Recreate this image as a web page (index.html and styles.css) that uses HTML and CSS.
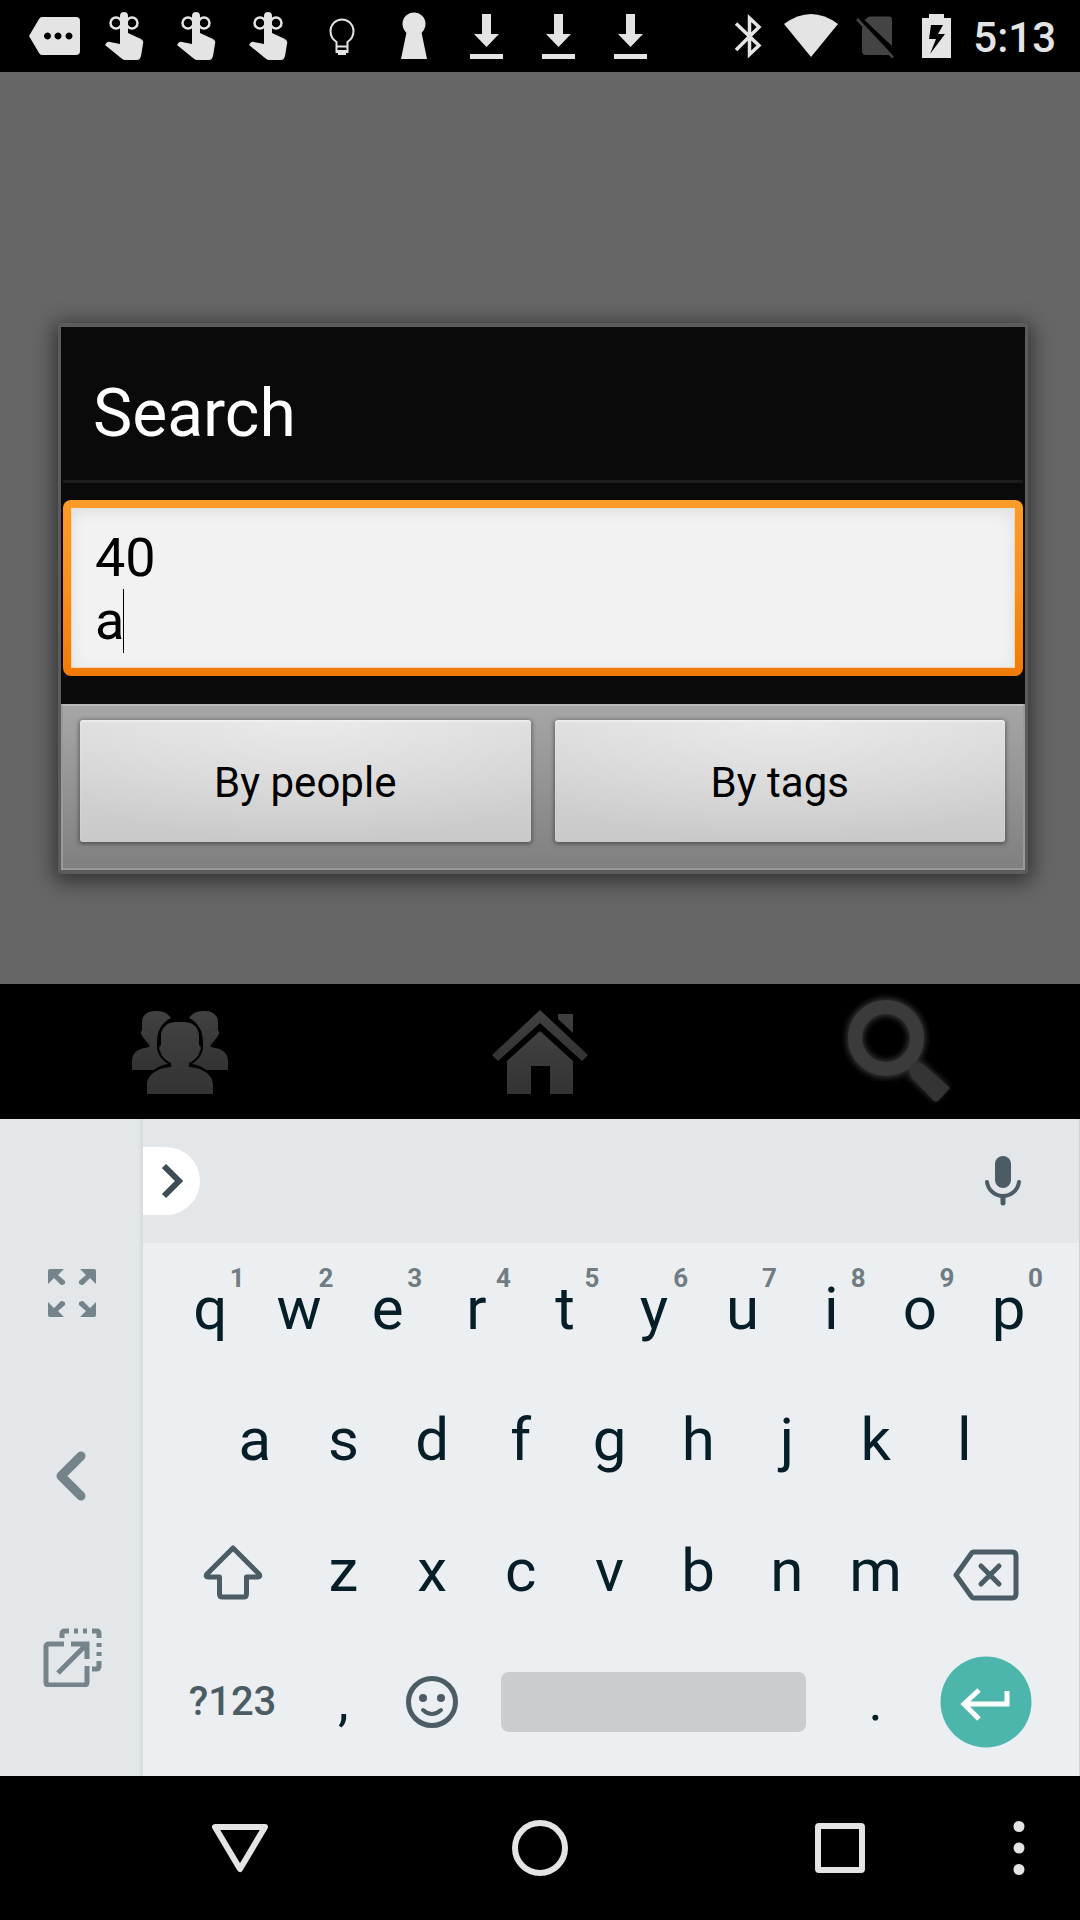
FILE: index.html
```html
<!DOCTYPE html>
<html lang="en">
<head>
<meta charset="utf-8">
<meta name="viewport" content="width=device-width, initial-scale=1">
<title>Search</title>
<link rel="stylesheet" href="styles.css">
</head>
<body>
<svg class="defs" aria-hidden="true">
  <defs>
    <linearGradient id="shade" x1="0" y1="0" x2="0" y2="1">
      <stop offset="0" stop-color="#414141"/>
      <stop offset="1" stop-color="#333"/>
    </linearGradient>
    <filter id="glow" x="-20%" y="-20%" width="140%" height="140%">
      <feGaussianBlur stdDeviation="3"/>
    </filter>
    <symbol id="reminder" viewBox="0 0 72 72">
      <path d="M30 16a4 4 0 0 1 8 0v17l13 6q3 2 2 5l-2 12q-1 4-4 4H35q-2 0-4-2L15 45q2-4 5-3l10 2z"/>
      <circle cx="26" cy="23" r="5.500" fill="none" stroke="currentColor" stroke-width="2.500"/>
      <circle cx="42" cy="23" r="5.500" fill="none" stroke="currentColor" stroke-width="2.500"/>
    </symbol>
    <symbol id="download" viewBox="0 0 72 72">
      <path d="M32 14h9v20h8L36.500 47 24 34h8zM20 54h33v5H20z"/>
    </symbol>
  </defs>
</svg>

<header class="status">
  <div class="notifications">
    <svg class="note" viewBox="0 0 72 72"><path fill-rule="evenodd" d="M24 17h34a4 4 0 0 1 4 4v30a4 4 0 0 1-4 4H24q-2 0-3-2L11 36l10-17q1-2 3-2zM29.500 32.500a3.500 3.500 0 1 0 .01 0zM40 32.500a3.500 3.500 0 1 0 .01 0zM51 32.500a3.500 3.500 0 1 0 .01 0z"/></svg>
    <svg class="note"><use href="#reminder"/></svg>
    <svg class="note"><use href="#reminder"/></svg>
    <svg class="note"><use href="#reminder"/></svg>
    <svg class="note" viewBox="0 0 72 72"><path fill="none" stroke="currentColor" stroke-width="2" d="M30.500 52V42q-6-4-6-11a11.500 11.500 0 0 1 23 0q0 7-6 11v10zM31 46.500h10"/><path d="M30 50h12v3h-2v2h-8v-2h-2z"/></svg>
    <svg class="note" viewBox="0 0 72 72"><circle cx="36" cy="24" r="11.500"/><path d="M29 30h14l6 29H23z"/></svg>
    <svg class="note"><use href="#download"/></svg>
    <svg class="note"><use href="#download"/></svg>
    <svg class="note"><use href="#download"/></svg>
  </div>
  <div class="system">
    <svg class="signal" viewBox="0 0 63 72"><path fill="none" stroke="currentColor" stroke-width="3.500" d="M19 23.500l23 22-9.500 9V18l9.500 9-23 23"/></svg>
    <svg class="signal" viewBox="0 0 63 72"><path d="M4 24q27-20 54 0L31 57z"/></svg>
    <svg class="signal dim" viewBox="0 0 63 72"><path d="M26 16.500h20a3 3 0 0 1 3 3V46L21.500 20zM19 26l29 28q-1 1-3 1H23q-4 0-4-4z"/><path d="M15 18l36 38.500-2 2L13 20z"/></svg>
    <svg class="signal" viewBox="0 0 63 72"><path fill-rule="evenodd" d="M16 18h7v-4h15v4h7v40H16zM25 25l-2 14h7l-6 15 15-20h-7l5-9z"/></svg>
    <time class="clock">5:13</time>
  </div>
</header>

<main class="stage">
  <div class="app">
    <div class="canvas"></div>
    <nav class="tabs" aria-label="Sections">
      <button class="tab" aria-label="People">
        <svg width="96" height="84" viewBox="0 0 96 84" fill="url(#shade)"><path d="M39 8C34 0 24 1 22 1 15 1 10 6 10 12v8q-2 2 0 6l8 10q0 1-5 2C5 39 0 44 0 51v9h22q6-5 14-6c-8-6-12-12-11-21 0-12 4-20 14-25zM57 8C62 0 72 1 74 1c7 0 12 5 12 11v8q2 2 0 6l-8 10q0 1 5 2c8 1 13 6 13 13v9H74q-6-5-14-6c8-6 12-12 11-21 0-12-4-20-14-25z"/><path d="M44 12h8c9 0 15 6 15 14v9q3 2 1 6-2 8-11 12v4c14 1 24 8 24 18v9H15v-9c0-10 10-17 24-18v-4q-9-4-11-12-2-4 1-6v-9c0-8 6-14 15-14z"/></svg>
      </button>
      <button class="tab" aria-label="Home">
        <svg width="96" height="84" viewBox="0 0 96 84" fill="url(#shade)"><path d="M48 0l48 45-6 6-42-38L6 51l-6-6zM66 4h15v19L66 9z"/><path d="M48 21l33 30v33H58V56H39v28H15V51z"/></svg>
      </button>
      <button class="tab" aria-label="Search">
        <svg width="116" height="116" viewBox="0 0 116 116">
          <g filter="url(#glow)" fill="none" stroke="#3a3a3a"><circle cx="44" cy="44" r="31" stroke-width="17"/><path d="M72 74l28 26" stroke-width="20"/></g>
          <circle cx="44" cy="44" r="31" fill="none" stroke="#3b3b3b" stroke-width="14"/>
          <path d="M66 75l8-8 8 4 26 23-12 13q-2 1-4 0L70 84z" fill="#343434"/>
        </svg>
      </button>
    </nav>
  </div>

  <form class="dialog" role="dialog" aria-labelledby="dialog-title">
    <h1 class="title" id="dialog-title">Search</h1>
    <div class="body">
      <div class="field">
        <textarea class="query" rows="2" aria-labelledby="dialog-title">40
a</textarea>
        <span class="caret"></span>
      </div>
    </div>
    <div class="actions">
      <button class="action" type="button">By people</button>
      <button class="action" type="button">By tags</button>
    </div>
  </form>
</main>

<section class="keyboard" aria-label="Keyboard">
  <div class="rail">
    <button class="tool" aria-label="Full size">
      <svg width="60" height="60" viewBox="0 0 60 60"><g fill="currentColor"><path d="M6 8q0-2 2-2h14l-6 6 7 6q1 4-4 4l-7-7-6 6zM54 8q0-2-2-2H38l6 6-7 6q-1 4 4 4l7-7 6 6zM6 52q0 2 2 2h14l-6-6 7-6q1-4-4-4l-7 7-6-6zM54 52q0 2-2 2H38l6-6-7-6q-1-4 4-4l7 7 6-6z"/></g></svg>
    </button>
    <button class="tool" aria-label="Move left">
      <svg width="60" height="60" viewBox="0 0 60 60"><path fill="none" stroke="currentColor" stroke-width="9" stroke-linecap="round" stroke-linejoin="round" d="M39 11L19 31l20 20"/></svg>
    </button>
    <button class="tool" aria-label="Float">
      <svg width="60" height="60" viewBox="0 0 60 60"><g fill="none" stroke="currentColor" stroke-width="5"><path d="M22 17H7q-3 0-3 3v35q0 3 3 3h35q3 0 3-3V39"/><path d="M29 17h16v15M44 18L16 46M20 11V7q0-3 3-3h4M32 4h4M41 4h4M50 4h5q2 0 2 3v4M57 16v4M57 25v4M57 34v5q0 3-3 3h-4"/></g></svg>
    </button>
  </div>
  <div class="pad">
    <div class="strip">
      <button class="expand" aria-label="More tools">
        <svg width="57" height="68" viewBox="0 0 57 68"><path fill="none" stroke="#3c4d55" stroke-width="6" d="M21 19l15 15-15 15"/></svg>
      </button>
      <button class="mic" aria-label="Voice input">
        <svg width="40" height="52" viewBox="0 0 40 52"><rect x="12" y="1" width="16" height="32" rx="8" fill="currentColor"/><path fill="none" stroke="currentColor" stroke-width="4" stroke-linecap="round" d="M4 27c1 8 8 14 16 14s15-6 16-14"/><path fill="none" stroke="currentColor" stroke-width="5" stroke-linecap="round" d="M20 42v6"/></svg>
      </button>
    </div>
    <div class="keys">
      <button class="key">q<span class="hint">1</span></button>
      <button class="key">w<span class="hint">2</span></button>
      <button class="key">e<span class="hint">3</span></button>
      <button class="key">r<span class="hint">4</span></button>
      <button class="key">t<span class="hint">5</span></button>
      <button class="key">y<span class="hint">6</span></button>
      <button class="key">u<span class="hint">7</span></button>
      <button class="key">i<span class="hint">8</span></button>
      <button class="key">o<span class="hint">9</span></button>
      <button class="key">p<span class="hint">0</span></button>

      <button class="key indent">a</button>
      <button class="key">s</button>
      <button class="key">d</button>
      <button class="key">f</button>
      <button class="key">g</button>
      <button class="key">h</button>
      <button class="key">j</button>
      <button class="key">k</button>
      <button class="key">l</button>

      <button class="key wide first" aria-label="Shift">
        <svg width="60" height="60" viewBox="0 0 60 60"><path fill="none" stroke="currentColor" stroke-width="5" stroke-linejoin="round" d="M30 7L4 33q-2 3 1 3h11.500v17q0 3 3 3h21q3 0 3-3V36H55q3 0 1-3z"/></svg>
      </button>
      <button class="key">z</button>
      <button class="key">x</button>
      <button class="key">c</button>
      <button class="key">v</button>
      <button class="key">b</button>
      <button class="key">n</button>
      <button class="key">m</button>
      <button class="key wide" aria-label="Backspace">
        <svg width="66" height="60" viewBox="0 0 66 60"><path fill="none" stroke="currentColor" stroke-width="5" stroke-linejoin="round" d="M21 11h38q4 0 4 4v38q0 4-4 4H21q-2 0-3-2L3 34l15-21q1-2 3-2z"/><path stroke="currentColor" stroke-width="5" stroke-linecap="round" d="M28 25l18 18M46 25L28 43"/></svg>
      </button>

      <button class="key wide first symbols">?123</button>
      <button class="key mark">,</button>
      <button class="key icon" aria-label="Emoji">
        <svg width="52" height="52" viewBox="0 0 52 52"><circle cx="26" cy="26" r="23.500" fill="none" stroke="currentColor" stroke-width="5"/><circle cx="17" cy="22" r="4" fill="currentColor"/><circle cx="35" cy="22" r="4" fill="currentColor"/><path fill="none" stroke="currentColor" stroke-width="4" stroke-linecap="round" d="M17 34q9 8 18 0"/></svg>
      </button>
      <button class="key space" aria-label="Space"><span class="bar"></span></button>
      <button class="key mark">.</button>
      <button class="key wide" aria-label="Enter">
        <svg width="92" height="92" viewBox="0 0 92 92"><circle cx="46" cy="46" r="45.500" fill="#4db6ac"/><path fill="none" stroke="#fff" stroke-width="5" d="M67 35v13H23M39 34L24 48l15 15"/></svg>
      </button>
    </div>
  </div>
</section>

<nav class="system-nav" aria-label="System">
  <button class="nav-key back" aria-label="Back">
    <svg width="60" height="60" viewBox="0 0 60 60"><path fill="none" stroke="currentColor" stroke-width="6" stroke-linejoin="round" d="M5 9h50L30 51z"/></svg>
  </button>
  <button class="nav-key" aria-label="Home">
    <svg width="60" height="60" viewBox="0 0 60 60"><circle cx="30" cy="30" r="25" fill="none" stroke="currentColor" stroke-width="6"/></svg>
  </button>
  <button class="nav-key" aria-label="Recent apps">
    <svg width="60" height="60" viewBox="0 0 60 60"><rect x="8" y="8" width="44" height="44" rx="1" fill="none" stroke="currentColor" stroke-width="6" stroke-linejoin="round"/></svg>
  </button>
  <button class="nav-key menu" aria-label="Menu">
    <svg width="60" height="60" viewBox="0 0 60 60" fill="currentColor"><circle cx="29" cy="8.500" r="5.500"/><circle cx="29" cy="30" r="5.500"/><circle cx="29" cy="51.500" r="5.500"/></svg>
  </button>
</nav>
</body>
</html>
```
FILE: styles.css
```css
* {
  box-sizing: border-box;
}

body {
  margin: 0;
  min-height: 100vh;
  display: flex;
  flex-direction: column;
  background: #000;
  font-family: Roboto, "Noto Sans", sans-serif;
}

button {
  margin: 0;
  padding: 0;
  border: 0;
  background: none;
  color: inherit;
  font: inherit;
}

svg {
  display: block;
  flex: none;
}

.defs {
  position: absolute;
  width: 0;
  height: 0;
}

/* Status bar */

.status {
  display: flex;
  justify-content: space-between;
  height: 72px;
  padding: 0 24px 0 18px;
  background: #000;
  color: #e4e4e4;
}

.notifications,
.system {
  display: flex;
  align-items: center;
}

.note,
.signal {
  width: 72px;
  height: 72px;
  fill: currentColor;
}

.signal {
  width: 63px;
}

.dim {
  color: #444;
}

.clock {
  padding: 4px 0 0 4px;
  font-size: 42px;
  font-weight: 500;
  line-height: 68px;
}

/* App behind the dialog */

.stage {
  flex: 1;
  display: grid;
}

.app,
.dialog {
  grid-area: 1 / 1;
}

.app {
  display: flex;
  flex-direction: column;
}

.canvas {
  flex: 1;
  background: #666;
}

.tabs {
  display: flex;
  height: 135px;
  background: #000;
}

.tab {
  flex: 1;
  display: flex;
  align-items: center;
  justify-content: center;
}

/* Dialog */

.dialog {
  z-index: 1;
  align-self: center;
  margin: 6px 52px 0 58px;
  border: solid #5c5c5c;
  border-width: 4px 3px;
  border-radius: 4px;
  background: #0a0a0a;
  box-shadow: 0 4px 20px 4px rgba(0, 0, 0, 0.5);
}

.title {
  margin: 0 2px;
  padding: 48px 30px 27px;
  border-bottom: 3px solid #1c1c1c;
  color: #fff;
  font-size: 66px;
  font-weight: 400;
  line-height: 78px;
}

.body {
  padding: 17px 2px 28px;
}

.field {
  position: relative;
  padding: 8px;
  border-radius: 8px;
  background: linear-gradient(#fc9c28, #f98f1c 50%, #f07a08);
}

.query {
  display: block;
  width: 100%;
  height: 160px;
  padding: 18px 23px 16px;
  border: 1px solid #f5d5ac;
  border-width: 0 1px 1px;
  border-radius: 0;
  outline: 0;
  resize: none;
  overflow: hidden;
  background: #f2f2f2;
  box-shadow: inset 0 4px 16px rgba(0, 0, 0, 0.08);
  color: #000;
  font: 400 54px/63px Roboto, "Noto Sans", sans-serif;
}

.caret {
  position: absolute;
  left: 60px;
  top: 89px;
  width: 1px;
  height: 64px;
  background: #000;
}

.actions {
  display: flex;
  gap: 24px;
  padding: 14px 18px 26px 17px;
  border: 2px solid #999;
  border-top-color: #bbb;
  background: linear-gradient(#a6a6a6, #808080);
}

.action {
  flex: 1;
  height: 122px;
  padding-top: 4px;
  border-radius: 3px;
  background: radial-gradient(ellipse 70% 100% at 50% 0, rgba(255, 255, 255, 0.4), rgba(255, 255, 255, 0)), linear-gradient(#dcdcdc, #c9c9c9);
  box-shadow: 0 1px 4px 1px rgba(0, 0, 0, 0.4), inset 0 2px 2px rgba(255, 255, 255, 0.4);
  color: #000;
  font-size: 42px;
  line-height: 50px;
}

/* Keyboard */

.keyboard {
  display: flex;
  background: #ebeff2;
  color: #4b5c64;
}

.rail {
  display: flex;
  flex-direction: column;
  align-items: center;
  gap: 122px;
  width: 143px;
  padding-top: 144px;
  background: linear-gradient(to left, #d5dadc, #e3e7ea 5px);
  color: #75838a;
}

.pad {
  flex: 1;
  border-right: 1px solid #cdd2d4;
}

.strip {
  display: flex;
  align-items: center;
  justify-content: space-between;
  height: 124px;
  padding-right: 56px;
  background: #e3e7ea;
}

.expand {
  border-radius: 0 34px 34px 0;
  background: #fff;
}

.keys {
  display: grid;
  grid-template-columns: repeat(20, 1fr);
  grid-auto-rows: 131px;
  padding: 0 26px 9px 23px;
}

.key {
  position: relative;
  grid-column: span 2;
  display: flex;
  align-items: center;
  justify-content: center;
  color: #051e27;
  font-size: 60px;
  line-height: 70px;
}

.indent {
  grid-column: 2 / span 2;
}

.wide {
  grid-column: span 3;
  color: #4b5c64;
}

.first {
  grid-column: 1 / span 3;
}

.hint {
  position: absolute;
  top: 19px;
  right: 10px;
  color: #707c82;
  font-size: 26px;
  font-weight: 700;
  line-height: 32px;
}

.symbols {
  font-size: 40px;
  font-weight: 500;
}

.mark {
  font-size: 54px;
}

.icon {
  color: #4b5c64;
}

.space {
  grid-column: span 8;
  padding: 0 25px;
}

.bar {
  flex: 1;
  height: 60px;
  border-radius: 8px;
  background: #c9cdd0;
}

/* System navigation */

.system-nav {
  display: grid;
  grid-template-columns: 90px repeat(3, 1fr) 90px;
  height: 144px;
  background: #000;
  color: #e4e4e4;
}

.nav-key {
  display: flex;
  align-items: center;
  justify-content: center;
}

.back {
  grid-column: 2;
}

.menu {
  justify-content: flex-start;
}
```
